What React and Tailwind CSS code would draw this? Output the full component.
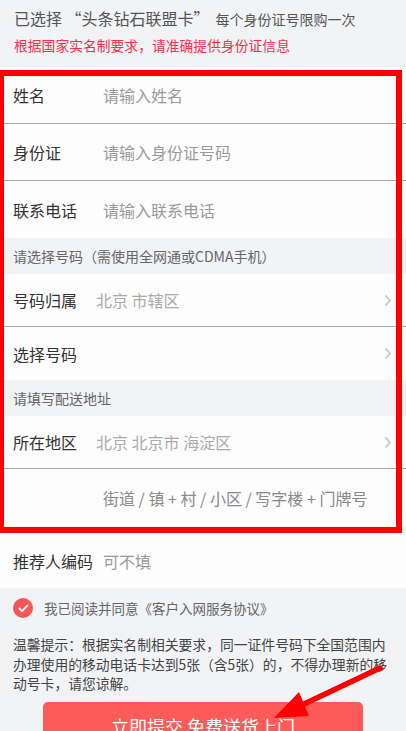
import React from 'react';

// ── Shared bits ───────────────────────────────────────────────────────────────

const FONT = { fontFamily: '"Noto Sans CJK SC", "Noto Sans", sans-serif' };

function Chevron() {
  return (
    <svg viewBox="0 0 8 13" className="w-[8px] h-[13px] shrink-0" fill="none" stroke="#cfcfcf" strokeWidth="2">
      <path d="M1.5 1.5L6 6.5L1.5 11.5" />
    </svg>
  );
}

function InputRow({ label, placeholder, divider = true }) {
  return (
    <div className={`h-[57px] flex items-center pl-[13px] ${divider ? 'border-b border-[#a9a9a9]' : ''}`}>
      <span className="w-[90px] shrink-0 text-[16px] text-[#333]">{label}</span>
      <span className="text-[16px] text-[#9a9a9a]">{placeholder}</span>
    </div>
  );
}

function SelectRow({ label, value, divider = true }) {
  return (
    <div className={`h-[53px] flex items-center pl-[13px] pr-[14px] ${divider ? 'border-b border-[#a9a9a9]' : ''}`}>
      <span className="w-[83px] shrink-0 text-[16px] text-[#333]">{label}</span>
      <span className="flex-1 text-[16px] text-[#ababab]">{value}</span>
      <Chevron />
    </div>
  );
}

function SectionHeader({ children }) {
  return (
    <div className="h-[36px] flex items-center pl-[13px] text-[14px] text-[#666] bg-[#f2f3f5]">
      {children}
    </div>
  );
}

// ── Page ──────────────────────────────────────────────────────────────────────

export default function App() {
  return (
    <div className="relative w-[406px] h-[731px] overflow-hidden bg-[#f2f3f5]" style={FONT}>

      {/* Header */}
      <div className="h-[67px] pl-[14px] pt-[6px]">
        <div className="flex items-baseline h-[26px]">
          <span className="text-[16px] text-[#555]">已选择 “头条钻石联盟卡”</span>
          <span className="ml-[6px] text-[14px] text-[#555]">每个身份证号限购一次</span>
        </div>
        <p className="mt-[3px] text-[13.8px] text-[#f8304a]">根据国家实名制要求，请准确提供身份证信息</p>
      </div>

      {/* Identity */}
      <div className="bg-[#fdfdfd]">
        <InputRow label="姓名" placeholder="请输入姓名" />
        <InputRow label="身份证" placeholder="请输入身份证号码" />
        <InputRow label="联系电话" placeholder="请输入联系电话" divider={false} />
      </div>

      <SectionHeader>请选择号码（需使用全网通或CDMA手机）</SectionHeader>
      <div className="bg-[#fdfdfd]">
        <SelectRow label="号码归属" value="北京 市辖区" />
        <SelectRow label="选择号码" value="" divider={false} />
      </div>

      <SectionHeader>请填写配送地址</SectionHeader>
      <div className="bg-[#fdfdfd]">
        <SelectRow label="所在地区" value="北京 北京市 海淀区" />
        <div className="h-[57px] flex items-center pl-[103px] text-[16px] text-[#8a8a8a]">
          街道 / 镇 + 村 / 小区 / 写字楼 + 门牌号
        </div>
      </div>

      {/* Referrer */}
      <div className="mt-[7px] h-[55px] flex items-center pl-[13px] bg-[#fdfdfd]">
        <span className="w-[90px] shrink-0 text-[16px] text-[#333]">推荐人编码</span>
        <span className="text-[16px] text-[#9a9a9a]">可不填</span>
      </div>

      {/* Agreement */}
      <div className="h-[38px] mt-[1px] flex items-center pl-[13px] gap-[11px]">
        <div className="w-[20px] h-[20px] rounded-full bg-[#f35757] flex items-center justify-center">
          <svg viewBox="0 0 12 10" className="w-[11px] h-[9px]" fill="none" stroke="#fff" strokeWidth="2" strokeLinecap="round" strokeLinejoin="round">
            <path d="M1.5 5L4.5 8L10.5 1.5" />
          </svg>
        </div>
        <span className="text-[13.5px] text-[#666]">我已阅读并同意《客户入网服务协议》</span>
      </div>

      {/* Notice */}
      <p className="px-[13px] pt-[8px] text-[13.8px] leading-[19.5px] text-[#444]">
        温馨提示：根据实名制相关要求，同一证件号码下全国范围内<br />
        办理使用的移动电话卡达到5张（含5张）的，不得办理新的移<br />
        动号卡，请您谅解。
      </p>

      {/* Submit */}
      <div className="mt-[8px] pl-[43px]">
        <button className="w-[320px] h-[50px] rounded-[5px] bg-[#fe5a5a] text-white text-[18px]">
          立即提交 免费送货上门
        </button>
      </div>

      {/* Annotation: red frame */}
      <div className="absolute left-[-2px] top-[70px] w-[404px] h-[463px] border-[6px] border-[#ff0000] pointer-events-none" />

      {/* Annotation: arrow */}
      <svg className="absolute left-0 top-0 w-[406px] h-[731px] pointer-events-none" viewBox="0 0 406 731">
        <path d="M380 668L302 705" stroke="#ff0000" strokeWidth="5.5" strokeLinecap="round" />
        <path d="M274 718L299 692L309 716Z" fill="#ff0000" />
      </svg>
    </div>
  );
}
